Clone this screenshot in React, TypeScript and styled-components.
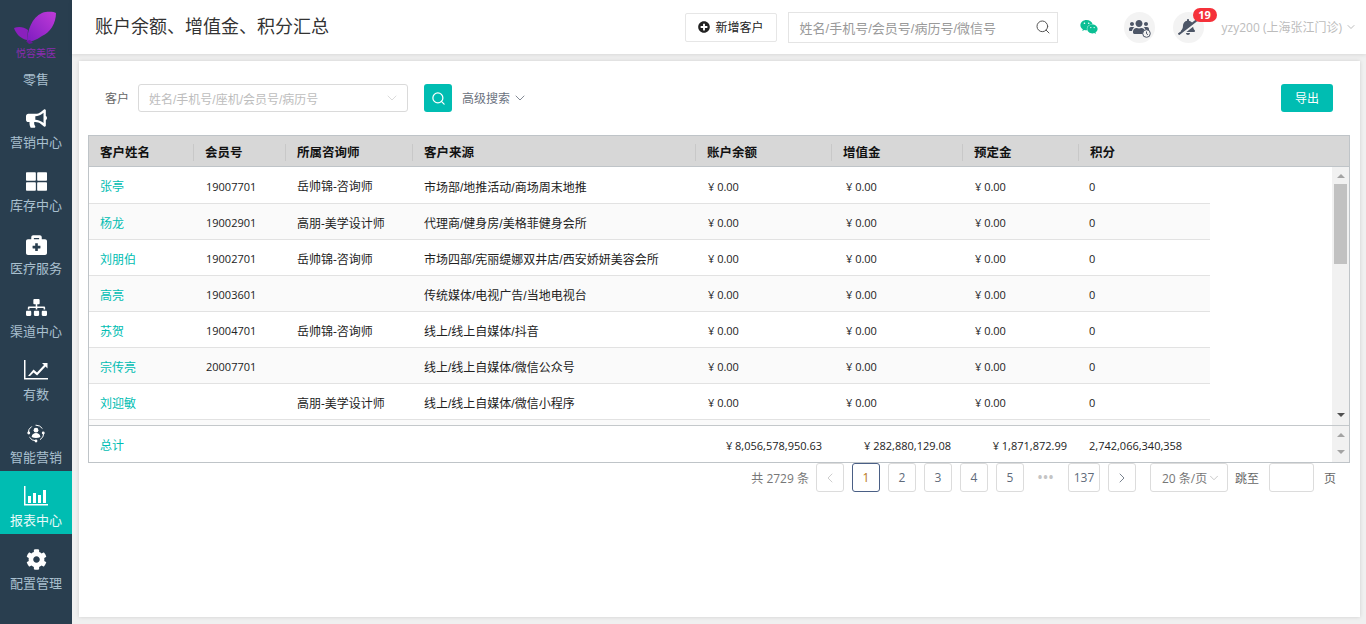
import React from 'react'
import styled, { createGlobalStyle } from 'styled-components'
import { ChevronDown, ChevronLeft, ChevronRight, Search } from 'lucide-react'
import {
  FaBullhorn,
  FaThLarge,
  FaBriefcaseMedical,
  FaSitemap,
  FaCog,
  FaPlusCircle,
  FaWeixin,
  FaBellSlash,
  FaUsers,
} from 'react-icons/fa'

const TEAL = '#00bdb2'
const COLUMNS = '105px 92px 127px 283px 136px 131px 116px 131px'
const SLASH_FONT = '"Liberation Sans", "Noto Sans CJK SC", sans-serif'

const GlobalStyle = createGlobalStyle`
  html, body, #root {
    height: 100%;
    margin: 0;
  }
  body {
    font-family: "Open Sans", "Noto Sans CJK SC", sans-serif;
    font-size: 12px;
    color: #222;
    overflow: hidden;
  }
  * {
    box-sizing: border-box;
  }
`

const Page = styled.div`
  display: flex;
  width: 1366px;
  height: 624px;
  background: #f0f0f0;
`

const Sidebar = styled.nav`
  width: 72px;
  flex: none;
  background: #293e4f;
  display: flex;
  flex-direction: column;
`

const Logo = styled.div`
  height: 62px;
  display: flex;
  flex-direction: column;
  align-items: center;
  padding-top: 11px;
`

const LogoText = styled.span`
  font-size: 10px;
  line-height: 11px;
  color: #8a2bb0;
  margin-top: 3px;
`

const RetailLabel = styled.div`
  height: 31px;
  padding-top: 7px;
  text-align: center;
  font-size: 13px;
  line-height: 20px;
  color: #a9c0cf;
`

const NavItem = styled.div<{ $active?: boolean }>`
  height: 63px;
  display: flex;
  flex-direction: column;
  align-items: center;
  padding-top: 13px;
  background: ${p => (p.$active ? TEAL : 'transparent')};
  color: ${p => (p.$active ? '#e8fbfa' : '#a9c0cf')};
  font-size: 13px;
  line-height: 20px;
`

const NavIcon = styled.div`
  height: 24px;
  display: flex;
  align-items: center;
  justify-content: center;
  color: #fff;
  font-size: 21px;
  margin-bottom: 2px;
`

const Main = styled.div`
  flex: 1;
  min-width: 0;
  display: flex;
  flex-direction: column;
`

const Header = styled.header`
  height: 54px;
  flex: none;
  background: #fff;
  box-shadow: 0 1px 4px rgba(0, 0, 0, 0.1);
  display: flex;
  align-items: center;
  padding: 0 9px 0 23px;
  position: relative;
`

const Title = styled.h1`
  margin: 0 0 5px;
  flex: 1;
  font-size: 18px;
  font-weight: 400;
  color: #333;
`

const AddButton = styled.button`
  width: 92px;
  height: 29px;
  margin-right: 11px;
  display: flex;
  align-items: center;
  justify-content: center;
  gap: 6px;
  background: #fff;
  border: 1px solid #e6e6e6;
  border-radius: 2px;
  font: inherit;
  color: #222;
  svg {
    font-size: 12px;
  }
`

const HeaderSearch = styled.div`
  width: 270px;
  height: 31px;
  display: flex;
  align-items: center;
  justify-content: space-between;
  padding: 0 6px 0 11px;
  border: 1px solid #e4e4e4;
  font-family: ${SLASH_FONT};
  font-size: 13px;
  color: #9a9a9a;
  margin-right: 22px;
  svg {
    color: #555;
  }
`

const WeChat = styled.div`
  width: 20px;
  display: flex;
  color: #0bbf94;
  font-size: 18px;
  margin-right: 24px;
`

const RoundIcon = styled.div`
  width: 31px;
  height: 31px;
  border-radius: 50%;
  background: #f3f3f3;
  display: flex;
  align-items: center;
  justify-content: center;
  color: #4d5667;
  font-size: 20px;
  margin-right: 18px;
  position: relative;
`

const FlippedBell = styled(FaBellSlash)`
  transform: scaleX(-1);
`

const Badge = styled.span`
  position: absolute;
  left: 20px;
  top: -4px;
  width: 24px;
  height: 14px;
  border-radius: 7px;
  background: #f5313a;
  color: #fff;
  font-size: 11px;
  font-weight: 700;
  line-height: 14px;
  text-align: center;
`

const UserName = styled.div`
  display: flex;
  align-items: center;
  gap: 3px;
  color: #bcbcbc;
  white-space: nowrap;
`

const Content = styled.main`
  flex: 1;
  min-height: 0;
  padding: 7px 6px 7px 7px;
`

const Card = styled.section`
  height: 100%;
  background: #fff;
  box-shadow: 0 0 4px rgba(0, 0, 0, 0.14);
  padding: 23px 10px 0 9px;
`

const FilterRow = styled.div`
  height: 28px;
  display: flex;
  align-items: center;
  padding: 0 17px;
  margin-bottom: 23px;
`

const FilterLabel = styled.span`
  width: 33px;
  color: #666;
`

const FilterSelect = styled.div`
  width: 270px;
  height: 28px;
  display: flex;
  align-items: center;
  justify-content: space-between;
  padding: 0 7px 0 10px;
  border: 1px solid #dadada;
  border-radius: 3px;
  font-family: ${SLASH_FONT};
  color: #bdbdbd;
  svg {
    color: #c8c8c8;
  }
`

const SearchButton = styled.button`
  width: 28px;
  height: 28px;
  margin-left: 16px;
  padding: 0;
  display: flex;
  align-items: center;
  justify-content: center;
  background: ${TEAL};
  border: 0;
  border-radius: 3px;
  color: #fff;
`

const Advanced = styled.div`
  flex: 1;
  display: flex;
  align-items: center;
  gap: 2px;
  margin-left: 10px;
  color: #6b7280;
`

const ExportButton = styled.button`
  width: 52px;
  height: 28px;
  background: ${TEAL};
  border: 0;
  border-radius: 3px;
  color: #fff;
  font: inherit;
`

const Table = styled.div`
  border: 1px solid #bfc4c8;
`

const HeadRow = styled.div`
  height: 31px;
  padding-top: 3px;
  display: grid;
  grid-template-columns: ${COLUMNS};
  align-items: center;
  background: #d7d7d7;
  border-bottom: 1px solid #bfc4c8;
`

const HeadCell = styled.div<{ $first?: boolean }>`
  height: 17px;
  margin-left: ${p => (p.$first ? '0' : '-1px')};
  padding-left: 11px;
  font-size: 12.5px;
  font-weight: 700;
  line-height: 17px;
  color: #111;
  border-left: ${p => (p.$first ? '0' : '1px solid #c8c8c8')};
`

const Body = styled.div`
  height: 258px;
  display: flex;
  border-bottom: 1px solid #c4c8cb;
  box-sizing: content-box;
`

const Rows = styled.div`
  flex: 1;
  min-width: 0;
  overflow: hidden;
`

const Row = styled.div<{ $odd?: boolean }>`
  width: 1121px;
  height: 36px;
  padding-top: 2px;
  display: grid;
  grid-template-columns: ${COLUMNS};
  align-items: center;
  background: ${p => (p.$odd ? '#fafafa' : '#fff')};
  border-bottom: 1px solid #e2e2e2;
  color: #222;
  &:first-child {
    height: 37px;
  }
`

const Cell = styled.div<{ $pad?: number; $num?: boolean; $slash?: boolean }>`
  padding-left: ${p => p.$pad ?? 11}px;
  white-space: nowrap;
  font-size: ${p => (p.$num ? '11px' : '12px')};
  ${p => (p.$slash ? `font-family: ${SLASH_FONT};` : '')}
`

const NameCell = styled(Cell)`
  color: ${TEAL};
`

const Track = styled.div`
  width: 17px;
  flex: none;
  background: #f1f1f1;
  display: flex;
  flex-direction: column;
  align-items: center;
  justify-content: space-between;
  padding: 7px 0 8px;
`

const Arrow = styled.span<{ $down?: boolean; $color?: string }>`
  width: 0;
  height: 0;
  border-left: 4px solid transparent;
  border-right: 4px solid transparent;
  ${p => (p.$down ? 'border-top' : 'border-bottom')}: 4px solid ${p => p.$color ?? '#a3a3a3'};
`

const Thumb = styled.div`
  width: 13px;
  height: 80px;
  margin-top: 6px;
  background: #c1c1c1;
`

const Spacer = styled.div`
  flex: 1;
`

const Foot = styled.div`
  height: 36px;
  display: flex;
`

const FootRow = styled.div`
  flex: 1;
  padding-top: 2px;
  display: grid;
  grid-template-columns: ${COLUMNS};
  align-items: center;
  font-size: 11px;
`

const FootName = styled.div`
  grid-column: 1 / span 4;
  padding-left: 11px;
  font-size: 12px;
  color: ${TEAL};
`

const FootAmount = styled.div<{ $right: number }>`
  text-align: right;
  padding-right: ${p => p.$right}px;
  white-space: nowrap;
`

const FootPoints = styled.div`
  padding-left: 10px;
  white-space: nowrap;
`

const Pager = styled.div`
  display: flex;
  align-items: center;
  justify-content: flex-end;
  padding-right: 14px;
  height: 29px;
  color: #666;
`

const Total = styled.span`
  margin-right: 7px;
  color: #777;
`

const PageButton = styled.div<{ $active?: boolean; $wide?: boolean; $color?: string }>`
  width: ${p => (p.$wide ? 32 : 28)}px;
  height: 29px;
  margin-right: 8px;
  display: flex;
  align-items: center;
  justify-content: center;
  border: 1px solid ${p => (p.$active ? '#4a5f85' : '#dcdcdc')};
  border-radius: 3px;
  color: ${p => p.$color ?? (p.$active ? '#b8761a' : '#5f6b7a')};
`

const Dots = styled.div`
  width: 28px;
  margin-right: 8px;
  text-align: center;
  letter-spacing: 1px;
  font-weight: 700;
  color: #c4c4c4;
`

const SizeSelect = styled.div`
  width: 78px;
  height: 29px;
  margin-left: 6px;
  padding-left: 11px;
  display: flex;
  align-items: center;
  border: 1px solid #dcdcdc;
  border-radius: 3px;
  color: #777;
  white-space: nowrap;
  svg {
    color: #b5b5b5;
  }
`

const JumpLabel = styled.span`
  margin: 0 10px 0 7px;
`

const JumpInput = styled.div`
  width: 45px;
  height: 29px;
  border: 1px solid #dcdcdc;
  border-radius: 3px;
  margin-right: 10px;
`

const Butterfly = () => (
  <svg width="44" height="34" viewBox="0 0 44 34">
    <defs>
      <linearGradient id="wing" x1="0" y1="1" x2="1" y2="0">
        <stop offset="0" stopColor="#7d1cc0" />
        <stop offset="1" stopColor="#c03bd8" />
      </linearGradient>
    </defs>
    <path d="M13 31C13 20 18 6 28 2c6-2 12-1 14 0 0 10-6 20-14 23-6 4-11 6-15 6z" fill="url(#wing)" />
    <path d="M0 17c5-2 10-1 14 2l-1 10C7 28 2 23 0 17z" fill="#8a20bd" />
    <path d="M12 30l3 3 4-1-3-3z" fill="#6a189c" />
  </svg>
)

const SmartIcon = () => (
  <svg width="20" height="20" viewBox="0 0 20 20" fill="none">
    <circle cx="10" cy="10" r="7.8" stroke="#fff" strokeWidth="1" strokeDasharray="8 4" />
    <circle cx="10" cy="7.2" r="2.4" fill="#fff" />
    <path d="M5.6 14c.4-3 2.2-4 4.4-4s4 1 4.4 4c-2.6 1.4-6.2 1.4-8.8 0z" fill="#fff" />
    <circle cx="2.8" cy="10" r="1.4" fill="#fff" />
    <circle cx="17.2" cy="10" r="1.4" fill="#fff" />
    <circle cx="10" cy="18" r="1.4" fill="#fff" />
  </svg>
)

const ChartIcon = () => (
  <svg width="24" height="20" viewBox="0 0 24 20" fill="#fff">
    <path d="M0 0h1.5v18H24v1.5H0z" />
    <path d="M4 16l5.5-6.5 3.5 3L20 5l-2-2h5.5v5.5l-2-2-8.4 9-3.6-3L6 16z" />
  </svg>
)

const BarsIcon = () => (
  <svg width="24" height="20" viewBox="0 0 24 20" fill="#fff">
    <path d="M0 0h1.5v18H24v1.5H0z" />
    <path d="M4 10h3v7H4zM9 7h3v10H9zM14 9h3v8h-3zM19 4h3v13h-3z" />
  </svg>
)

const ClockBadge = styled.svg`
  position: absolute;
  right: 4px;
  bottom: 5px;
`

const navItems: { label: string; icon: React.ReactNode; active?: boolean }[] = [
  { label: '营销中心', icon: <FaBullhorn /> },
  { label: '库存中心', icon: <FaThLarge /> },
  { label: '医疗服务', icon: <FaBriefcaseMedical /> },
  { label: '渠道中心', icon: <FaSitemap /> },
  { label: '有数', icon: <ChartIcon /> },
  { label: '智能营销', icon: <SmartIcon /> },
  { label: '报表中心', icon: <BarsIcon />, active: true },
  { label: '配置管理', icon: <FaCog /> },
]

const headers = ['客户姓名', '会员号', '所属咨询师', '客户来源', '账户余额', '增值金', '预定金', '积分']

const customers = [
  ['张亭', '19007701', '岳帅锦-咨询师', '市场部/地推活动/商场周末地推'],
  ['杨龙', '19002901', '高朋-美学设计师', '代理商/健身房/美格菲健身会所'],
  ['刘朋伯', '19002701', '岳帅锦-咨询师', '市场四部/宪丽缇娜双井店/西安娇妍美容会所'],
  ['高亮', '19003601', '', '传统媒体/电视广告/当地电视台'],
  ['苏贺', '19004701', '岳帅锦-咨询师', '线上/线上自媒体/抖音'],
  ['宗传亮', '20007701', '', '线上/线上自媒体/微信公众号'],
  ['刘迎敏', '', '高朋-美学设计师', '线上/线上自媒体/微信小程序'],
  ['', '', '', ''],
]

export default function App() {
  return (
    <Page>
      <GlobalStyle />
      <Sidebar>
        <Logo>
          <Butterfly />
          <LogoText>悦容美医</LogoText>
        </Logo>
        <RetailLabel>零售</RetailLabel>
        {navItems.map(item => (
          <NavItem key={item.label} $active={item.active}>
            <NavIcon>{item.icon}</NavIcon>
            {item.label}
          </NavItem>
        ))}
      </Sidebar>
      <Main>
        <Header>
          <Title>账户余额、增值金、积分汇总</Title>
          <AddButton>
            <FaPlusCircle />
            新增客户
          </AddButton>
          <HeaderSearch>
            姓名/手机号/会员号/病历号/微信号
            <Search size={16} strokeWidth={1.5} />
          </HeaderSearch>
          <WeChat>
            <FaWeixin />
          </WeChat>
          <RoundIcon>
            <FaUsers />
            <ClockBadge width="9" height="9" viewBox="0 0 9 9" fill="#f3f3f3" stroke="#4d5667">
              <circle cx="4.5" cy="4.5" r="3.8" />
              <path d="M4.5 2.5v2.2l1.5 1" fill="none" />
            </ClockBadge>
          </RoundIcon>
          <RoundIcon>
            <FlippedBell />
            <Badge>19</Badge>
          </RoundIcon>
          <UserName>
            yzy200 (上海张江门诊)
            <ChevronDown size={12} />
          </UserName>
        </Header>
        <Content>
          <Card>
            <FilterRow>
              <FilterLabel>客户</FilterLabel>
              <FilterSelect>
                姓名/手机号/座机/会员号/病历号
                <ChevronDown size={16} strokeWidth={1} />
              </FilterSelect>
              <SearchButton>
                <Search size={15} strokeWidth={2} />
              </SearchButton>
              <Advanced>
                高级搜索
                <ChevronDown size={16} strokeWidth={1.25} />
              </Advanced>
              <ExportButton>导出</ExportButton>
            </FilterRow>
            <Table>
              <HeadRow>
                {headers.map((h, i) => (
                  <HeadCell key={h} $first={i === 0}>
                    {h}
                  </HeadCell>
                ))}
              </HeadRow>
              <Body>
                <Rows>
                  {customers.map((c, i) => (
                    <Row key={i} $odd={i % 2 === 1}>
                      <NameCell>{c[0]}</NameCell>
                      <Cell $pad={12} $num>{c[1]}</Cell>
                      <Cell>{c[2]}</Cell>
                      <Cell $slash>{c[3]}</Cell>
                      {c[0] && (
                        <>
                          <Cell $pad={12} $num>¥ 0.00</Cell>
                          <Cell $pad={14} $num>¥ 0.00</Cell>
                          <Cell $pad={12} $num>¥ 0.00</Cell>
                          <Cell $pad={10} $num>0</Cell>
                        </>
                      )}
                    </Row>
                  ))}
                </Rows>
                <Track>
                  <Arrow />
                  <Thumb />
                  <Spacer />
                  <Arrow $down $color="#505050" />
                </Track>
              </Body>
              <Foot>
                <FootRow>
                  <FootName>总计</FootName>
                  <FootAmount $right={10}>¥ 8,056,578,950.63</FootAmount>
                  <FootAmount $right={12}>¥ 282,880,129.08</FootAmount>
                  <FootAmount $right={12}>¥ 1,871,872.99</FootAmount>
                  <FootPoints>2,742,066,340,358</FootPoints>
                </FootRow>
                <Track>
                  <Arrow />
                  <Arrow $down />
                </Track>
              </Foot>
            </Table>
            <Pager>
              <Total>共 2729 条</Total>
              <PageButton $color="#c4c4c4">
                <ChevronLeft size={16} strokeWidth={1.25} />
              </PageButton>
              <PageButton $active>1</PageButton>
              <PageButton>2</PageButton>
              <PageButton>3</PageButton>
              <PageButton>4</PageButton>
              <PageButton>5</PageButton>
              <Dots>•••</Dots>
              <PageButton $wide>137</PageButton>
              <PageButton>
                <ChevronRight size={16} strokeWidth={1.25} />
              </PageButton>
              <SizeSelect>
                20 条/页
                <ChevronDown size={14} strokeWidth={1.25} />
              </SizeSelect>
              <JumpLabel>跳至</JumpLabel>
              <JumpInput />
              <span>页</span>
            </Pager>
          </Card>
        </Content>
      </Main>
    </Page>
  )
}
